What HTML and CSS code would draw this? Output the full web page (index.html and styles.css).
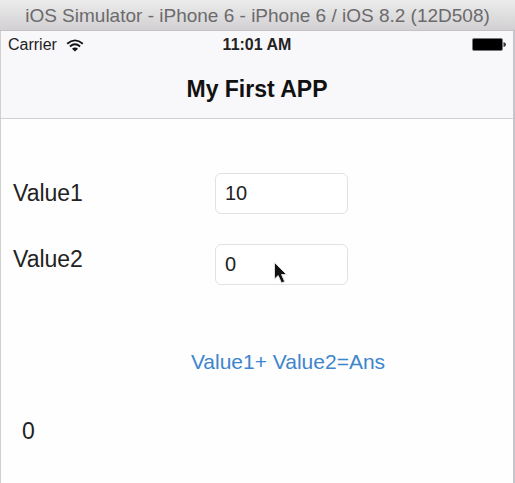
FILE: index.html
```html
<!DOCTYPE HTML>
<html lang="en">
	<head>
		<meta charset="utf-8"/>
		<title>My First APP</title>
		<link rel="stylesheet" href="styles.css">
	</head>
	<body>
		<div class="titlebar">iOS Simulator - iPhone 6 - iPhone 6 / iOS 8.2 (12D508)</div>
		<div class="screen">
			<header class="top">
				<div class="status">
					<div class="carrier">
						<span>Carrier</span>
						<svg class="wifi" width="18" height="13" viewBox="0 0 18 13" aria-hidden="true">
							<path d="M1.2 4.8 Q9 -2 16.8 4.8" fill="none" stroke="#111" stroke-width="1.8"/>
							<path d="M3.9 7.5 Q9 3.1 14.1 7.5" fill="none" stroke="#111" stroke-width="1.8"/>
							<path d="M6 9.7 Q9 7.3 12 9.7 L9 12.6 Z" fill="#111"/>
						</svg>
					</div>
					<div class="time">11:01 AM</div>
					<svg class="battery" width="34" height="14" viewBox="0 0 34 14" aria-hidden="true">
						<rect x="0.5" y="0.5" width="30" height="12" rx="1.5" fill="#000" stroke="#777"/>
						<path d="M31.5 4 Q34 4.5 34 6.5 Q34 8.5 31.5 9 Z" fill="#333"/>
					</svg>
				</div>
				<h1>My First APP</h1>
			</header>
			<form class="calc">
				<div class="fields">
					<div class="labels">
						<label for="value1">Value1</label>
						<label for="value2">Value2</label>
					</div>
					<div class="inputs">
						<input type="text" id="value1" value="10">
						<input type="text" id="value2" value="0">
					</div>
				</div>
				<button type="button" class="add">Value1+ Value2=Ans</button>
				<output class="ans" for="value1 value2">0</output>
			</form>
		</div>
		<svg class="cursor" width="16" height="24" viewBox="0 0 16 24" aria-hidden="true">
			<path d="M1.5 1.5 V18 L5.2 14.6 L8.5 22 L11.7 20.6 L8.5 13.5 H13.5 Z" fill="#111" stroke="#ddd" stroke-width="1"/>
		</svg>
	</body>
</html>
```

FILE: styles.css
```css
*{box-sizing: border-box;}
body{margin: 0;min-height: 100vh;display: flex;flex-direction: column;background: #fefefe;color: #222;font-family: "Liberation Sans", Arial, sans-serif;}

.titlebar{height: 31px;line-height: 32px;font-size: 19px;text-align: center;white-space: nowrap;color: #6c6a6c;background: linear-gradient(#ececec, #d2d0d2);border-bottom: 1px solid #c4c2c4;}
.screen{flex: 1;border-left: 1px solid #d0d0d0;border-right: 2px solid #c6c6ca;}

.top{height: 88px;background: #f8f7fa;border-bottom: 1px solid #d0d0d2;}
.status{display: grid;grid-template-columns: 1fr auto 1fr;align-items: center;height: 28px;padding: 0 7px;font-size: 16px;}
.carrier{display: flex;align-items: center;gap: 9px;}
.time{font-weight: bold;}
.battery{justify-self: end;}
h1{margin: 0;line-height: 60px;font-size: 23px;text-align: center;color: #111;}

.calc{padding: 54px 12px 0;}
.fields{display: grid;grid-template-columns: 202fr 133fr 153fr;}
.labels,.inputs{display: flex;flex-direction: column;}
.labels{gap: 26px;}
.labels label{height: 40px;line-height: 40px;font-size: 23px;}
.inputs{gap: 30px;}
.inputs input{width: 100%;height: 41px;padding: 0 9px;border: 1px solid #e2e1e5;border-radius: 6px;background: #fff;color: #222;font-family: inherit;font-size: 20px;}

.add{display: block;width: 200px;height: 40px;margin: 57px 0 0 175px;padding: 0;border: 0;background: none;color: #3d85cc;font-family: inherit;font-size: 21px;white-space: nowrap;}
.ans{display: block;margin: 29px 0 0 9px;line-height: 40px;font-size: 23px;}

/* mouse pointer */
.cursor{position: absolute;left: 273px;top: 261px;}
```
